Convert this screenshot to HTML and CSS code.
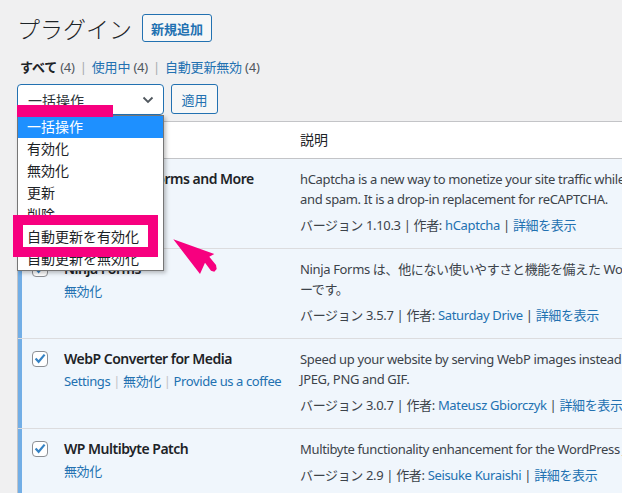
FILE: index.html
```html
<!DOCTYPE html>
<html lang="ja">
<head>
<meta charset="utf-8">
<title>プラグイン</title>
<link rel="stylesheet" href="styles.css">
</head>
<body>
<div class="wrap">
  <div class="head">
    <h1 class="title">プラグイン</h1>
    <a class="add-btn">新規追加</a>
  </div>
  <ul class="filters">
    <li><b class="current">すべて</b> <span class="count">(4)</span></li>
    <li class="sep">|</li>
    <li><a>使用中</a> <span class="count">(4)</span></li>
    <li class="sep">|</li>
    <li><a>自動更新無効</a> <span class="count">(4)</span></li>
  </ul>
  <div class="bulk">
    <div class="select">
      <span>一括操作</span>
      <svg class="chev" width="12" height="8" viewBox="0 0 12 8"><path d="M1.5 1.5 6 6l4.5-4.5" fill="none" stroke="#50575e" stroke-width="1.8"/></svg>
    </div>
    <button class="apply">適用</button>
  </div>

  <div class="plugins">
    <div class="row thead">
      <div class="cb"><span class="checkbox"></span></div>
      <div class="name">プラグイン</div>
      <div class="desc-h">説明</div>
    </div>

    <div class="row active first">
      <div class="cb"><span class="checkbox"><svg width="16" height="16" viewBox="0 0 16 16"><path d="M3.6 7.6 6.6 10.8 12.6 3.6" fill="none" stroke="#3582c4" stroke-width="2.2"/></svg></span></div>
      <div class="name"><strong>hCaptcha for Forms and More</strong><div class="actions"><a>無効化</a></div></div>
      <div class="desc"><p>hCaptcha is a new way to monetize your site traffic while keeping out bots<br>and spam. It is a drop-in replacement for reCAPTCHA.</p><div class="meta">バージョン 1.10.3 <span class="bar">|</span> 作者: <a>hCaptcha</a> <span class="bar">|</span> <a>詳細を表示</a></div></div>
    </div>

    <div class="row active">
      <div class="cb"><span class="checkbox"><svg width="16" height="16" viewBox="0 0 16 16"><path d="M3.6 7.6 6.6 10.8 12.6 3.6" fill="none" stroke="#3582c4" stroke-width="2.2"/></svg></span></div>
      <div class="name"><strong>Ninja Forms</strong><div class="actions"><a>無効化</a></div></div>
      <div class="desc"><p>Ninja Forms は、他にない使いやすさと機能を備えた WordPress 用フォームビルダ<br>ーです。</p><div class="meta">バージョン 3.5.7 <span class="bar">|</span> 作者: <a>Saturday Drive</a> <span class="bar">|</span> <a>詳細を表示</a></div></div>
    </div>

    <div class="row active">
      <div class="cb"><span class="checkbox"><svg width="16" height="16" viewBox="0 0 16 16"><path d="M3.6 7.6 6.6 10.8 12.6 3.6" fill="none" stroke="#3582c4" stroke-width="2.2"/></svg></span></div>
      <div class="name"><strong>WebP Converter for Media</strong><div class="actions"><a>Settings</a><span class="sep2">|</span><a>無効化</a><span class="sep2">|</span><a>Provide us a coffee</a></div></div>
      <div class="desc"><p>Speed up your website by serving WebP images instead of standard formats<br>JPEG, PNG and GIF.</p><div class="meta">バージョン 3.0.7 <span class="bar">|</span> 作者: <a>Mateusz Gbiorczyk</a> <span class="bar">|</span> <a>詳細を表示</a></div></div>
    </div>

    <div class="row active">
      <div class="cb"><span class="checkbox"><svg width="16" height="16" viewBox="0 0 16 16"><path d="M3.6 7.6 6.6 10.8 12.6 3.6" fill="none" stroke="#3582c4" stroke-width="2.2"/></svg></span></div>
      <div class="name"><strong>WP Multibyte Patch</strong><div class="actions"><a>無効化</a></div></div>
      <div class="desc"><p>Multibyte functionality enhancement for the WordPress Japanese package.</p><div class="meta">バージョン 2.9 <span class="bar">|</span> 作者: <a>Seisuke Kuraishi</a> <span class="bar">|</span> <a>詳細を表示</a></div></div>
    </div>
  </div>
</div>

<ul class="dropdown">
  <li class="sel">一括操作</li>
  <li>有効化</li>
  <li>無効化</li>
  <li>更新</li>
  <li>削除</li>
  <li>自動更新を有効化</li>
  <li>自動更新を無効化</li>
</ul>
<div class="mark-bar"></div>
<div class="mark-box"></div>
<svg class="cursor" width="60" height="50" viewBox="0 0 60 50"><path d="M8.3 9.3 49.3 24 44.3 26.7 51 35 51.7 39 49.3 41.7 46 40.7 40 32.7 35 44Z" fill="#f7007f"/></svg>
</body>
</html>
```

FILE: styles.css
```css
* { box-sizing: border-box; }
html, body { margin: 0; padding: 0; }
body {
  position: relative;
  width: 622px;
  height: 493px;
  overflow: hidden;
  background: #f0f0f1;
  font-family: "Noto Sans", "Noto Sans CJK JP", sans-serif;
  font-size: 13px;
  color: #3c434a;
}
a { color: #2271b1; text-decoration: none; }

.wrap { padding-left: 17px; }

.head {
  display: flex;
  align-items: center;
  gap: 10px;
  padding-top: 13px;
  height: 43px;
}
.title {
  margin: 0;
  font-family: "Noto Sans CJK JP", sans-serif;
  font-size: 23px;
  font-weight: 300;
  line-height: 30px;
  color: #1d2327;
}
.add-btn {
  display: inline-flex;
  align-items: center;
  height: 28px;
  padding: 0 8px;
  border: 1px solid #2271b1;
  border-radius: 3px;
  background: #f6f7f7;
  color: #2271b1;
  font-family: "Noto Sans CJK JP", sans-serif;
  font-size: 13px;
  font-weight: 700;
}

.filters {
  list-style: none;
  display: flex;
  margin: 14px 0 0 3px;
  padding: 0;
  height: 20px;
  line-height: 20px;
  font-size: 13px;
  letter-spacing: -0.2px;
}
.filters .current { color: #1d2327; font-weight: 700; }
.filters .count { color: #50575e; }
.filters .sep { color: #a7aaad; margin: 0 5px; }

.bulk {
  display: flex;
  gap: 7px;
  margin-top: 7px;
  height: 31px;
}
.select {
  display: flex;
  align-items: center;
  justify-content: space-between;
  width: 147px;
  height: 31px;
  padding: 0 9px 0 10px;
  border: 1px solid #2271b1;
  border-radius: 4px;
  background: #fff;
  color: #2c3338;
  font-size: 14px;
}
.apply {
  height: 30px;
  width: 47px;
  padding: 0;
  border: 1px solid #2271b1;
  border-radius: 3px;
  background: #f6f7f7;
  color: #2271b1;
  font-family: "Noto Sans", "Noto Sans CJK JP", sans-serif;
  font-size: 13px;
}

.plugins {
  margin-top: 6px;
  width: 1000px;
  background: #fff;
  border: 1px solid #c3c4c7;
  border-right: none;
}
.row {
  display: grid;
  grid-template-columns: 36px 236px 1fr;
  height: 90px;
  border-top: 1px solid #dcdcde;
}
.row.thead {
  height: 37px;
  border-top: none;
  border-bottom: 1px solid #c3c4c7;
  color: #1d2327;
  font-size: 14px;
  line-height: 20px;
}
.row.thead > div { padding-top: 8px; }
.row.thead .cb { padding: 10px 0 0 14px; }
.row.first { height: 89px; border-top: none; }
.row.active {
  background: #f0f6fc;
  box-shadow: inset 4px 0 0 #72aee6;
}
.cb { padding: 12px 0 0 14px; }
.checkbox {
  display: block;
  width: 16px;
  height: 16px;
  border: 1px solid #8c8f94;
  border-radius: 4px;
  background: #fff;
  position: relative;
}
.checkbox svg { position: absolute; left: -1px; top: -1px; }
.name { padding: 10px 10px 0 10px; line-height: 20px; }
.name strong {
  display: block;
  color: #1d2327;
  font-size: 14px;
  font-weight: 600;
  letter-spacing: -0.5px;
  white-space: nowrap;
}
.actions { margin-top: 2px; white-space: nowrap; letter-spacing: -0.4px; }
.actions .sep2 { color: #c3c4c7; margin: 0 3px; }
.desc-h { padding-left: 10px; }
.desc {
  padding: 10px 10px 0 10px;
  line-height: 20px;
  white-space: nowrap;
  letter-spacing: -0.35px;
}
.desc p { margin: 0 0 6px; }
.meta .bar { color: #3c434a; }

.dropdown {
  position: absolute;
  left: 17px;
  top: 115px;
  width: 147px;
  margin: 0;
  padding: 0;
  list-style: none;
  background: #fff;
  border: 1px solid #767676;
  box-shadow: 2px 2px 4px rgba(0, 0, 0, 0.25);
  font-size: 14px;
  color: #1d2327;
}
.dropdown li { height: 22px; line-height: 22px; padding-left: 9px; }
.dropdown li.sel { background: #1e90ff; color: #fff; }

.mark-bar {
  position: absolute;
  left: 17px;
  top: 105px;
  width: 96px;
  height: 12px;
  background: #f7007f;
}
.mark-box {
  position: absolute;
  left: 13px;
  top: 215px;
  width: 145px;
  height: 42px;
  border: 10px solid #f7007f;
}
.cursor { position: absolute; left: 165px; top: 230px; }
```
